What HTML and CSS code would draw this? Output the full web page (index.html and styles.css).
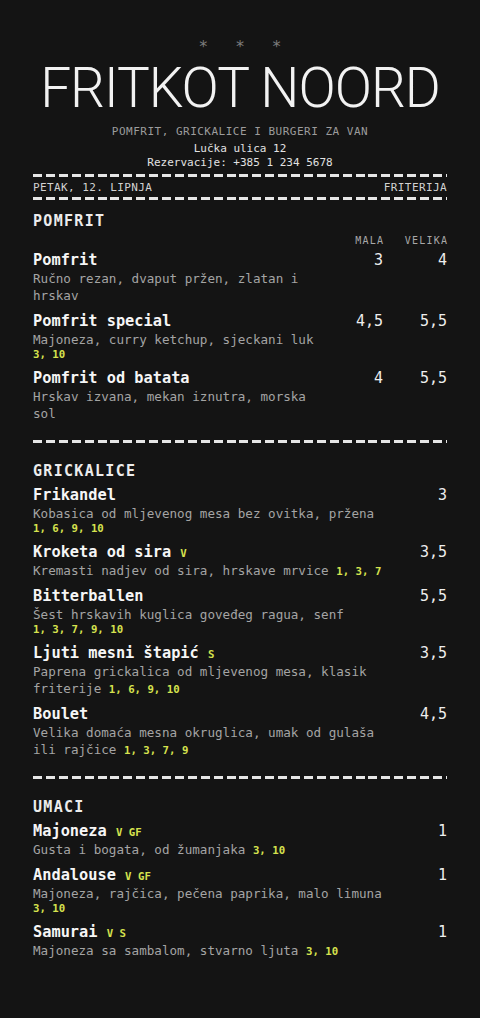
FILE: index.html
```html
<!DOCTYPE html>
<html lang="hr">
<head>
<meta charset="utf-8">
<title>Fritkot Noord</title>
<link rel="stylesheet" href="styles.css">
</head>
<body>
<main class="menu">
  <header class="head">
    <div class="stars"><span>*</span><span>*</span><span>*</span></div>
    <h1 class="title">FRITKOT NOORD</h1>
    <p class="tagline">POMFRIT, GRICKALICE I BURGERI ZA VAN</p>
    <p class="contact">Lučka ulica 12</p>
    <p class="contact">Rezervacije: +385 1 234 5678</p>
  </header>

  <div class="dash top"></div>
  <div class="datebar"><span>PETAK, 12. LIPNJA</span><span>FRITERIJA</span></div>
  <div class="dash"></div>

  <section class="section first">
    <h2 class="sec-title">POMFRIT</h2>
    <div class="item two heads">
      <span class="col-head">MALA</span>
      <span class="col-head">VELIKA</span>
    </div>
    <div class="item two">
      <div class="name">Pomfrit</div>
      <div class="price">3</div>
      <div class="price">4</div>
      <div class="desc"><span class="txt">Ručno rezan, dvaput pržen, zlatan i hrskav</span></div>
    </div>
    <div class="item two">
      <div class="name">Pomfrit special</div>
      <div class="price">4,5</div>
      <div class="price">5,5</div>
      <div class="desc"><span class="txt">Majoneza, curry ketchup, sjeckani luk </span><span class="alg">3, 10</span></div>
    </div>
    <div class="item two">
      <div class="name">Pomfrit od batata</div>
      <div class="price">4</div>
      <div class="price">5,5</div>
      <div class="desc"><span class="txt">Hrskav izvana, mekan iznutra, morska sol</span></div>
    </div>
  </section>

  <div class="dash sep"></div>

  <section class="section">
    <h2 class="sec-title">GRICKALICE</h2>
    <div class="item one">
      <div class="name">Frikandel</div>
      <div class="price">3</div>
      <div class="desc"><span class="txt">Kobasica od mljevenog mesa bez ovitka, pržena </span><span class="alg">1, 6, 9, 10</span></div>
    </div>
    <div class="item one">
      <div class="name">Kroketa od sira <span class="tag">V</span></div>
      <div class="price">3,5</div>
      <div class="desc"><span class="txt">Kremasti nadjev od sira, hrskave mrvice </span><span class="alg">1, 3, 7</span></div>
    </div>
    <div class="item one">
      <div class="name">Bitterballen</div>
      <div class="price">5,5</div>
      <div class="desc"><span class="txt">Šest hrskavih kuglica goveđeg ragua, senf </span><span class="alg">1, 3, 7, 9, 10</span></div>
    </div>
    <div class="item one">
      <div class="name">Ljuti mesni štapić <span class="tag">S</span></div>
      <div class="price">3,5</div>
      <div class="desc"><span class="txt">Paprena grickalica od mljevenog mesa, klasik friterije </span><span class="alg">1, 6, 9, 10</span></div>
    </div>
    <div class="item one">
      <div class="name">Boulet</div>
      <div class="price">4,5</div>
      <div class="desc"><span class="txt">Velika domaća mesna okruglica, umak od gulaša ili rajčice </span><span class="alg">1, 3, 7, 9</span></div>
    </div>
  </section>

  <div class="dash sep"></div>

  <section class="section">
    <h2 class="sec-title">UMACI</h2>
    <div class="item one">
      <div class="name">Majoneza <span class="tag">V GF</span></div>
      <div class="price">1</div>
      <div class="desc"><span class="txt">Gusta i bogata, od žumanjaka </span><span class="alg">3, 10</span></div>
    </div>
    <div class="item one">
      <div class="name">Andalouse <span class="tag">V GF</span></div>
      <div class="price">1</div>
      <div class="desc"><span class="txt">Majoneza, rajčica, pečena paprika, malo limuna </span><span class="alg">3, 10</span></div>
    </div>
    <div class="item one">
      <div class="name">Samurai <span class="tag">V S</span></div>
      <div class="price">1</div>
      <div class="desc"><span class="txt">Majoneza sa sambalom, stvarno ljuta </span><span class="alg">3, 10</span></div>
    </div>
  </section>
</main>
</body>
</html>
```

FILE: styles.css
```css
html, body {
  margin: 0;
  padding: 0;
  background: #141414;
}

body {
  font-family: "DejaVu Sans Mono", "Liberation Mono", monospace;
  color: #f0f0f0;
  min-height: 1018px;
}

.menu {
  padding: 37px 33px 40px;
}

.head {
  display: flex;
  flex-direction: column;
  align-items: center;
}

.stars {
  display: flex;
  gap: 27px;
  font-size: 16px;
  line-height: 20px;
  color: #7c7c7c;
}

.title {
  margin: 3px 0 0;
  font-family: Roboto, "Liberation Sans", sans-serif;
  font-weight: 300;
  font-size: 55px;
  line-height: 56px;
  letter-spacing: -1px;
  color: #f2f2f2;
}

.tagline {
  margin: 9px 0 0;
  font-size: 11px;
  line-height: 14px;
  letter-spacing: 0.5px;
  color: #9c9c9c;
}

.contact {
  margin: 3px 0 0;
  font-size: 11px;
  line-height: 14px;
  color: #e2e2e2;
}

.contact + .contact {
  margin-top: 0;
}

.dash {
  height: 3px;
  background: repeating-linear-gradient(90deg, #e6e6e6 0 9px, transparent 9px 12.9px);
}

.dash.top {
  margin-top: 4px;
}

.datebar {
  display: flex;
  justify-content: space-between;
  padding: 4px 0 2px;
  font-size: 11px;
  line-height: 14px;
  letter-spacing: 0.4px;
  color: #d2d2d2;
}

.dash.sep {
  margin-top: 18px;
}

.section {
  padding-top: 18px;
}

.section.first {
  padding-top: 11px;
}

.sec-title {
  margin: 0 0 4px;
  font-size: 15px;
  line-height: 20px;
  font-weight: bold;
  letter-spacing: 1.3px;
  color: #ececec;
}

.item {
  display: grid;
  column-gap: 8px;
  margin-top: 7px;
}

.item.two {
  grid-template-columns: 1fr 56px 56px;
}

.item.one {
  grid-template-columns: 1fr 56px;
}

.sec-title + .item {
  margin-top: 0;
}

.item.heads + .item {
  margin-top: 3px;
}

.col-head {
  font-size: 10px;
  line-height: 12px;
  letter-spacing: 1.2px;
  margin-right: -1.2px;
  color: #a8a8a8;
  text-align: right;
}

.col-head:first-child {
  grid-column: 2;
}

.name {
  font-size: 15.3px;
  line-height: 20px;
  font-weight: bold;
  color: #f6f6f6;
}

.price {
  font-size: 15px;
  line-height: 20px;
  text-align: right;
  color: #eeeeee;
}

.desc {
  grid-column: 1;
  font-size: 0;
  line-height: 0;
}

.txt {
  font-size: 12.6px;
  line-height: 17px;
  color: #a4a4a4;
}

.alg {
  font-size: 10.7px;
  line-height: 13px;
  font-weight: bold;
  white-space: nowrap;
  color: #d6e24e;
}

.tag {
  font-size: 10.7px;
  line-height: 1;
  font-weight: bold;
  color: #d6e24e;
}
```
